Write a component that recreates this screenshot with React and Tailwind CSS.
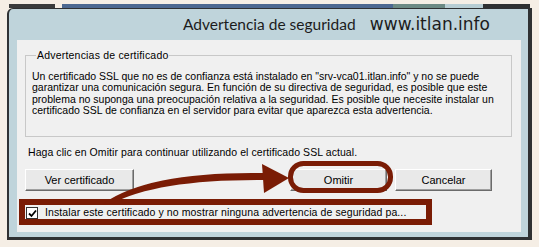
const body = { fontFamily: '"Liberation Sans", Arial, sans-serif' };

const WinButton = ({ label, className = "" }) => {
  return (
    <div
      className={`h-[22px] flex items-center justify-center bg-[#e9e9e9] border border-t-white border-l-white border-r-[#6b6b6b] border-b-[#6b6b6b] shadow-[inset_-1px_-1px_0_#a0a0a0] text-[11px] text-black ${className}`}
    >
      {label}
    </div>
  );
};

const Overlay = () => {
  return (
    <svg
      className="absolute inset-0 pointer-events-none"
      width="539"
      height="247"
      viewBox="0 0 539 247"
    >
      {/* highlight around checkbox row */}
      <rect x="22" y="202" width="407" height="20" fill="none" stroke="#7a1c05" strokeWidth="6" />
      {/* rounded outline around Omitir */}
      <rect x="290.5" y="163.5" width="100" height="27" rx="13" fill="none" stroke="#7a1c05" strokeWidth="5" />
      {/* curved arrow */}
      <path d="M104 203 Q150 171 265 173 L265 180 Q158 179 111 204 Z" fill="#7a1c05" />
      <polygon points="262,164 289,178 264,193" fill="#7a1c05" />
    </svg>
  );
};

export default function App() {
  return (
    <div className="w-[539px] h-[247px] bg-[#f5eee5] relative overflow-hidden" style={body}>
      <div className="flex h-[4px] mt-[4px]">
        <div className="ml-[9px] w-[46px] bg-[#3a3b3c]" />
        <div className="w-[7px]" />
        <div className="w-[331px] bg-[#4c6891]" />
        <div className="w-[52px] bg-[#6c8a84]" />
        <div className="w-[38px] bg-[#b7cdd3]" />
        <div className="w-[47px] bg-[#2f3132]" />
      </div>

      <div className="ml-[7px] w-[525px] h-[232px] border-l-2 border-t border-r-4 border-b-[3px] border-[#2f3133] rounded-tl-[6px] bg-[#bfd4db] flex flex-col">
        <div className="h-[31px] flex items-center justify-between pl-[174px] pr-[38px] pt-[1px]">
          <span className="text-[15.5px] text-[#1c1c1c]" style={{ fontFamily: 'Lato, "Noto Sans", sans-serif' }}>
            Advertencia de seguridad
          </span>
          <span className="text-[17px] text-[#1c1c1c]" style={{ fontFamily: '"DejaVu Sans", Verdana, sans-serif' }}>
            www.itlan.info
          </span>
        </div>

        <div className="ml-[8px] mr-[7px] h-[192px] bg-[#f0f0f0] flex flex-col text-[10.5px] text-black">
          <div className="relative mt-[15px] ml-[8px] mr-[9px] h-[82px] border border-[#c8c8c8]">
            <span className="absolute -top-[7px] left-[10px] px-[1px] bg-[#f0f0f0] leading-[12px] tracking-[0.2px]">
              Advertencias de certificado
            </span>
            <p className="pt-[15px] pl-[6px] leading-[11.3px] whitespace-nowrap">
              Un certificado SSL que no es de confianza está instalado en "srv-vca01.itlan.info" y no se puede
              <br />
              garantizar una comunicación segura. En función de su directiva de seguridad, es posible que este
              <br />
              problema no suponga una preocupación relativa a la seguridad. Es posible que necesite instalar un
              <br />
              certificado SSL de confianza en el servidor para evitar que aparezca esta advertencia.
            </p>
          </div>

          <div className="mt-[10px] ml-[11px] h-[11px] leading-[11px] whitespace-nowrap tracking-[0.07px]">
            Haga clic en Omitir para continuar utilizando el certificado SSL actual.
          </div>

          <div className="flex mt-[11px] ml-[8px]">
            <WinButton label="Ver certificado" className="w-[109px]" />
            <WinButton label="Omitir" className="w-[97px] ml-[156px]" />
            <WinButton label="Cancelar" className="w-[97px] ml-[8px]" />
          </div>

          <div className="flex items-center mt-[16px] ml-[9px] h-[12px]">
            <span className="w-[12px] h-[12px] border border-[#333] bg-white flex items-center justify-center">
              <svg width="9" height="9" viewBox="0 0 9 9">
                <path d="M1 4.5 L3.5 7 L8 1.5" fill="none" stroke="#000" strokeWidth="1.8" />
              </svg>
            </span>
            <span className="ml-[7px] whitespace-nowrap text-[10.5px] tracking-[0.1px]">
              Instalar este certificado y no mostrar ninguna advertencia de seguridad pa...
            </span>
          </div>
        </div>
      </div>

      <Overlay />
    </div>
  );
}
